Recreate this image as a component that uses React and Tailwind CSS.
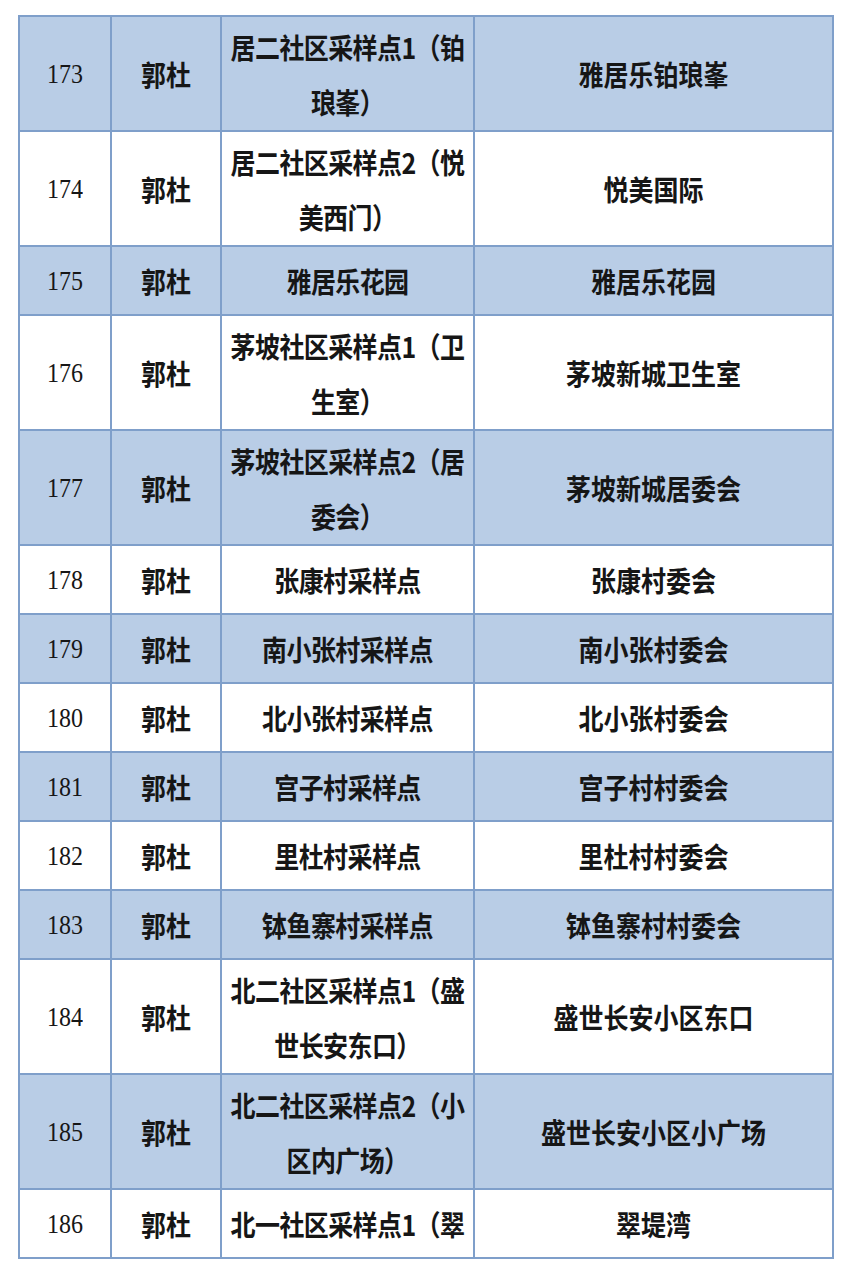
import React from "react";

const rows = [
  ["173", "郭杜", ["居二社区采样点1（铂", "琅峯）"], "雅居乐铂琅峯"],
  ["174", "郭杜", ["居二社区采样点2（悦", "美西门）"], "悦美国际"],
  ["175", "郭杜", ["雅居乐花园"], "雅居乐花园"],
  ["176", "郭杜", ["茅坡社区采样点1（卫", "生室）"], "茅坡新城卫生室"],
  ["177", "郭杜", ["茅坡社区采样点2（居", "委会）"], "茅坡新城居委会"],
  ["178", "郭杜", ["张康村采样点"], "张康村委会"],
  ["179", "郭杜", ["南小张村采样点"], "南小张村委会"],
  ["180", "郭杜", ["北小张村采样点"], "北小张村委会"],
  ["181", "郭杜", ["宫子村采样点"], "宫子村村委会"],
  ["182", "郭杜", ["里杜村采样点"], "里杜村村委会"],
  ["183", "郭杜", ["钵鱼寨村采样点"], "钵鱼寨村村委会"],
  ["184", "郭杜", ["北二社区采样点1（盛", "世长安东口）"], "盛世长安小区东口"],
  ["185", "郭杜", ["北二社区采样点2（小", "区内广场）"], "盛世长安小区小广场"],
  ["186", "郭杜", ["北一社区采样点1（翠"], "翠堤湾"],
];

const cjk = { fontFamily: '"Noto Sans CJK SC", "Noto Sans", sans-serif' };
const serif = { fontFamily: '"Liberation Serif", "Times New Roman", serif' };

function T({ children }) {
  return <span className="inline-block scale-y-[1.15]">{children}</span>;
}

export default function App() {
  return (
    <div className="w-[845px] h-[1273px] bg-white pt-[15px] pl-[18px]">
      <table className="border-collapse w-[814px] table-fixed text-[#161616]">
        <colgroup>
          <col className="w-[92px]" />
          <col className="w-[110px]" />
          <col className="w-[253px]" />
          <col className="w-[359px]" />
        </colgroup>
        <tbody>
          {rows.map((r, i) => {
            const blue = i % 2 === 0;
            const two = r[2].length > 1;
            const bg = blue ? "bg-[#b9cde6]" : "bg-white";
            const h = two ? "h-[115px]" : "h-[69px]";
            return (
              <tr key={r[0]} className={`${bg} ${h}`}>
                <td
                  className="border-2 border-[#7f9fca] text-center align-middle text-[24px] leading-none"
                  style={serif}
                >
                  <T>{r[0]}</T>
                </td>
                <td
                  className="border-2 border-[#7f9fca] text-center align-middle text-[25px] font-bold leading-none"
                  style={cjk}
                >
                  <T>{r[1]}</T>
                </td>
                <td
                  className="border-2 border-[#7f9fca] text-center align-middle text-[25px] font-bold leading-[55px] whitespace-nowrap tracking-[-0.6px]"
                  style={cjk}
                >
                  {r[2].map((line, j) => (
                    <div key={j}>
                      <T>{line}</T>
                    </div>
                  ))}
                </td>
                <td
                  className="border-2 border-[#7f9fca] text-center align-middle text-[25px] font-bold leading-none"
                  style={cjk}
                >
                  <T>{r[3]}</T>
                </td>
              </tr>
            );
          })}
        </tbody>
      </table>
    </div>
  );
}
